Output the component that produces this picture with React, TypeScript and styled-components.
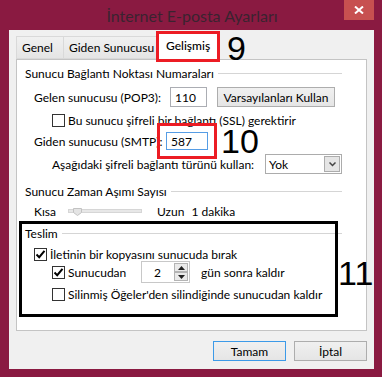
import styled, { createGlobalStyle } from 'styled-components';

const GlobalStyle = createGlobalStyle`
  html, body {
    margin: 0;
    padding: 0;
  }
  body {
    font-family: Lato, "Noto Sans", sans-serif;
    font-size: 12px;
    color: #000;
  }
`;

const Frame = styled.div`
  width: 382px;
  height: 377px;
  background: #8a1a41;
  display: flex;
  flex-direction: column;
  box-sizing: border-box;
  position: relative;
  overflow: hidden;
`;

const TitleBar = styled.div`
  height: 30px;
  display: flex;
  align-items: center;
  justify-content: center;
  font-size: 16px;
  color: #3a2330;
  padding-left: 2px;
`;

const CloseButton = styled.div`
  position: absolute;
  top: 0;
  right: 8px;
  width: 30px;
  height: 20px;
  background: #c75050;
  display: flex;
  align-items: center;
  justify-content: center;
`;

const Client = styled.div`
  margin: 0 8px 8px 9px;
  flex: 1;
  background: #f0f0f0;
  display: flex;
  flex-direction: column;
  padding: 2px 7px 0 7px;
`;

const TabRow = styled.div`
  height: 28px;
  display: flex;
  align-items: flex-end;
  padding-left: 1px;
  margin-bottom: -1px;
  position: relative;
  z-index: 1;
`;

const Tab = styled.div<{ $active?: boolean; $w: number }>`
  box-sizing: border-box;
  width: ${(p) => p.$w}px;
  height: ${(p) => (p.$active ? '27px' : '23px')};
  margin-bottom: ${(p) => (p.$active ? '0' : '1px')};
  margin-left: ${(p) => (p.$active ? '0' : '-1px')};
  padding-left: ${(p) => (p.$active ? '7px' : '5px')};
  border: 1px solid #d9d9d9;
  border-bottom: ${(p) => (p.$active ? 'none' : '1px solid #d9d9d9')};
  background: ${(p) => (p.$active ? '#fff' : 'linear-gradient(#f0f0f0, #e5e5e5)')};
  display: flex;
  align-items: center;
  ${(p) => p.$active && 'outline: 3px solid #ec1c24; outline-offset: -1px; padding-bottom: 3px; font-weight: 500;'}
`;

const Note = styled.span`
  font-family: "Liberation Sans", Arial, sans-serif;
  font-size: 34px;
  line-height: 1;
  color: #000;
`;

const TabNote = styled(Note)`
  align-self: flex-start;
  margin-left: 9px;
  margin-top: -1px;
`;

const Panel = styled.div`
  height: 272px;
  box-sizing: border-box;
  border: 1px solid #c4c4c4;
  background: #fff;
  display: flex;
  flex-direction: column;
`;

const GroupHeader = styled.div<{ $top: number; $left?: number; $right?: number }>`
  display: flex;
  align-items: center;
  height: 14px;
  margin-top: ${(p) => p.$top}px;
  margin-left: ${(p) => p.$left ?? 8}px;
  margin-right: ${(p) => p.$right ?? 24}px;
  gap: 4px;
  white-space: nowrap;
`;

const GroupLine = styled.div`
  flex: 1;
  height: 1px;
  background: #d5d5d5;
`;

const Row = styled.div<{ $top: number; $left: number; $h: number }>`
  display: flex;
  align-items: center;
  height: ${(p) => p.$h}px;
  margin-top: ${(p) => p.$top}px;
  padding-left: ${(p) => p.$left}px;
  white-space: nowrap;
  position: relative;
`;

const Label = styled.span<{ $w?: number }>`
  ${(p) => (p.$w ? `width: ${p.$w}px; flex-shrink: 0;` : '')}
`;

const TextBox = styled.div<{ $w: number; $h: number; $focus?: boolean }>`
  box-sizing: border-box;
  width: ${(p) => p.$w}px;
  height: ${(p) => p.$h}px;
  border: 1px solid ${(p) => (p.$focus ? '#569de5' : '#abadb3')};
  background: #fff;
  display: flex;
  align-items: center;
  padding-left: 4px;
`;

const Annotated = styled.div`
  outline: 3px solid #ec1c24;
  outline-offset: 6px;
  display: flex;
`;

const Button = styled.div<{ $w: number; $default?: boolean }>`
  box-sizing: border-box;
  width: ${(p) => p.$w}px;
  height: 20px;
  border: 1px solid ${(p) => (p.$default ? '#3c9ae8' : '#adadad')};
  background: linear-gradient(#f0f0f0, #e5e5e5);
  display: flex;
  align-items: center;
  justify-content: center;
`;

const Box = styled.span`
  box-sizing: border-box;
  width: 13px;
  height: 13px;
  border: 1px solid #333;
  background: #fff;
  display: inline-flex;
  align-items: center;
  justify-content: center;
  margin-right: 3px;
  flex-shrink: 0;
`;

const Select = styled.div`
  box-sizing: border-box;
  width: 77px;
  height: 20px;
  margin-left: auto;
  margin-right: 24px;
  border: 1px solid #acacac;
  display: flex;
  align-items: center;
  justify-content: space-between;
  padding: 0 1px 0 3px;
`;

const DropArrow = styled.div`
  box-sizing: border-box;
  width: 16px;
  height: 16px;
  background: #e5e5e5;
  border: 1px solid #acacac;
  display: flex;
  align-items: center;
  justify-content: center;
`;

const Track = styled.div`
  position: relative;
  width: 74px;
  height: 4px;
  margin: 0 15px 0 0;
  background: #e7e7e7;
  border: 1px solid #d6d6d6;
  box-sizing: border-box;
`;

const Thumb = styled.svg`
  position: absolute;
  left: 4px;
  top: -2px;
`;

const Minutes = styled.span`
  margin-left: 7px;
`;

const Delivery = styled.div`
  position: relative;
  width: 313px;
  height: 90px;
  margin: 6px 0 0 5px;
  outline: 3px solid #000;
  display: flex;
  flex-direction: column;
`;

const DeliveryNote = styled(Note)`
  position: absolute;
  left: 316px;
  top: 32px;
`;

const Spinner = styled.div`
  box-sizing: border-box;
  width: 49px;
  height: 22px;
  border: 1px solid #c8c8c8;
  margin-right: 11px;
  display: flex;
  align-items: center;
  justify-content: space-between;
  padding: 0 1px 0 12px;
`;

const SpinButtons = styled.div`
  display: flex;
  flex-direction: column;
`;

const SpinButton = styled.div`
  box-sizing: border-box;
  width: 14px;
  height: 9px;
  background: #eaeaea;
  border: 1px solid #b4b4b4;
  display: flex;
  align-items: center;
  justify-content: center;
`;

const Footer = styled.div`
  display: flex;
  justify-content: flex-end;
  gap: 8px;
  margin-top: 10px;
`;

const Check = ({ checked }: { checked?: boolean }) => (
  <Box>
    {checked && (
      <svg width="11" height="11" viewBox="0 0 11 11">
        <path d="M1.5 5.5 L4.2 8.2 L9.5 1.8" fill="none" stroke="#000" strokeWidth="2" />
      </svg>
    )}
  </Box>
);

const Triangle = ({ up }: { up?: boolean }) => (
  <svg width="7" height="4" viewBox="0 0 7 4">
    <path d={up ? 'M0 4 L3.5 0 L7 4 Z' : 'M0 0 L3.5 4 L7 0 Z'} fill="#222" />
  </svg>
);

export default function App() {
  return (
    <>
      <GlobalStyle />
      <Frame>
        <TitleBar>İnternet E-posta Ayarları</TitleBar>
        <CloseButton>
          <svg width="10" height="8" viewBox="0 0 10 8">
            <path d="M1 0.5 L9 7.5 M9 0.5 L1 7.5" stroke="#fff" strokeWidth="2" />
          </svg>
        </CloseButton>
        <Client>
          <TabRow>
            <Tab $w={48}>Genel</Tab>
            <Tab $w={95}>Giden Sunucusu</Tab>
            <Tab $w={60} $active>Gelişmiş</Tab>
            <TabNote>9</TabNote>
          </TabRow>
          <Panel>
            <GroupHeader $top={6}>
              Sunucu Bağlantı Noktası Numaraları
              <GroupLine />
            </GroupHeader>
            <Row $top={7} $left={17} $h={20}>
              <Label $w={136}>Gelen sunucusu (POP3):</Label>
              <TextBox $w={37} $h={20}>110</TextBox>
              <Button $w={118} style={{ marginLeft: 10 }}>Varsayılanları Kullan</Button>
            </Row>
            <Row $top={7} $left={35} $h={13}>
              <Check />
              Bu sunucu şifreli bir bağlantı (SSL) gerektirir
            </Row>
            <Row $top={5} $left={17} $h={18}>
              <Label $w={132}>Giden sunucusu (SMTP):</Label>
              <Annotated>
                <TextBox $w={42} $h={18} $focus>587</TextBox>
              </Annotated>
              <Note style={{ marginLeft: 13 }}>10</Note>
            </Row>
            <Row $top={4} $left={35} $h={20}>
              Aşağıdaki şifreli bağlantı türünü kullan:
              <Select>
                Yok
                <DropArrow>
                  <svg width="7" height="5" viewBox="0 0 7 5">
                    <path d="M0.5 0.5 L3.5 3.5 L6.5 0.5" fill="none" stroke="#444" strokeWidth="1.5" />
                  </svg>
                </DropArrow>
              </Select>
            </Row>
            <GroupHeader $top={10}>
              Sunucu Zaman Aşımı Sayısı
              <GroupLine />
            </GroupHeader>
            <Row $top={6} $left={17} $h={14}>
              <Label $w={34}>Kısa</Label>
              <Track>
                <Thumb width="9" height="8" viewBox="0 0 9 8">
                  <path d="M0.5 0.5 H8.5 V4.5 L4.5 7.5 L0.5 4.5 Z" fill="#e4e4e4" stroke="#c2c2c2" />
                </Thumb>
              </Track>
              Uzun
              <Minutes>1 dakika</Minutes>
            </Row>
            <Delivery>
              <GroupHeader $top={2} $left={3} $right={-7}>
                Teslim
                <GroupLine />
              </GroupHeader>
              <Row $top={8} $left={12} $h={13}>
                <Check checked />
                İletinin bir kopyasını sunucuda bırak
              </Row>
              <Row $top={0} $left={30} $h={22}>
                <Check checked />
                <Label $w={73}>Sunucudan</Label>
                <Spinner>
                  2
                  <SpinButtons>
                    <SpinButton>
                      <Triangle up />
                    </SpinButton>
                    <SpinButton>
                      <Triangle />
                    </SpinButton>
                  </SpinButtons>
                </Spinner>
                gün sonra kaldır
              </Row>
              <Row $top={5} $left={30} $h={13}>
                <Check />
                Silinmiş Öğeler'den silindiğinde sunucudan kaldır
              </Row>
              <DeliveryNote>11</DeliveryNote>
            </Delivery>
          </Panel>
          <Footer>
            <Button $w={73} $default>Tamam</Button>
            <Button $w={73}>İptal</Button>
          </Footer>
        </Client>
      </Frame>
    </>
  );
}
